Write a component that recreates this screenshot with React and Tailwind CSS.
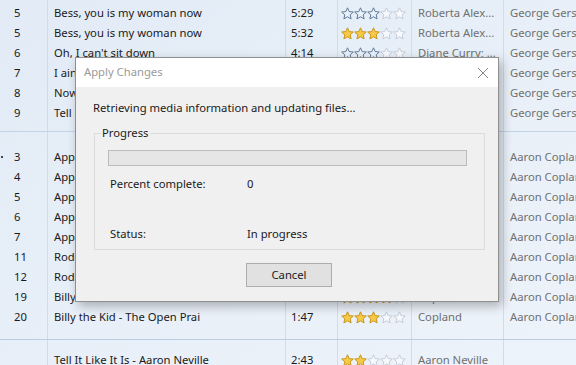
import React from "react";

const font = { fontFamily: '"Segoe UI", "Noto Sans", "Open Sans", sans-serif' };

const group1 = [
  { n: "5", t: "Bess, you is my woman now", d: "5:29", r: 3, c: "blue", a: "Roberta Alex...", aa: "George Gershwin" },
  { n: "5", t: "Bess, you is my woman now", d: "5:32", r: 3, c: "gold", a: "Roberta Alex...", aa: "George Gershwin" },
  { n: "6", t: "Oh, I can't sit down", d: "4:14", r: 3, c: "blue", a: "Diane Curry; ...", aa: "George Gershwin" },
  { n: "7", t: "I ain't got no shame", d: "3:05", r: 3, c: "blue", a: "Roberta Alex...", aa: "George Gershwin" },
  { n: "8", t: "Now your woman is gone", d: "2:11", r: 3, c: "blue", a: "Roberta Alex...", aa: "George Gershwin" },
  { n: "9", t: "Tell me it's true", d: "3:40", r: 3, c: "blue", a: "Roberta Alex...", aa: "George Gershwin" },
];

const group2 = [
  { n: "3", t: "Appalachian Spring - Allegro", d: "2:56", r: 3, c: "gold", a: "Copland", aa: "Aaron Copland" },
  { n: "4", t: "Appalachian Spring - Moderato", d: "3:10", r: 3, c: "gold", a: "Copland", aa: "Aaron Copland" },
  { n: "5", t: "Appalachian Spring - Fast", d: "2:25", r: 3, c: "gold", a: "Copland", aa: "Aaron Copland" },
  { n: "6", t: "Appalachian Spring - Allegro", d: "3:02", r: 3, c: "gold", a: "Copland", aa: "Aaron Copland" },
  { n: "7", t: "Appalachian Spring - Moderato", d: "4:40", r: 3, c: "gold", a: "Copland", aa: "Aaron Copland" },
  { n: "11", t: "Rodeo - Buckaroo Holiday", d: "7:40", r: 3, c: "gold", a: "Copland", aa: "Aaron Copland" },
  { n: "12", t: "Rodeo - Corral Nocturne", d: "3:34", r: 3, c: "gold", a: "Copland", aa: "Aaron Copland" },
  { n: "19", t: "Billy the Kid - Street in a...", d: "2:58", r: 4, c: "gold", a: "Copland", aa: "Aaron Copland" },
  { n: "20", t: "Billy the Kid - The Open Prai", d: "1:47", r: 3, c: "gold", a: "Copland", aa: "Aaron Copland" },
];

const Star = ({ kind }) => {
  const fill = kind === "gold" ? "#f8c945" : kind === "blue" ? "#e9f0f8" : "#f7f9fc";
  const stroke = kind === "gold" ? "#c8961f" : kind === "blue" ? "#5f7a99" : "#c4cdd8";
  return (
    <svg width="13" height="13" viewBox="0 0 13 13" className="shrink-0">
      <polygon
        points="6.5,0.8 8.2,4.6 12.3,5 9.2,7.8 10.1,11.9 6.5,9.8 2.9,11.9 3.8,7.8 0.7,5 4.8,4.6"
        fill={fill}
        stroke={stroke}
        strokeWidth="1"
        strokeLinejoin="round"
      />
    </svg>
  );
};

const Stars = ({ r, c }) => (
  <div className="flex">
    {[0, 1, 2, 3, 4].map((i) => (
      <Star key={i} kind={i < r ? c : "empty"} />
    ))}
  </div>
);

const Cells = ({ row, h = 20 }) => (
  <div className="flex items-center" style={{ height: h }}>
    <div className="w-[48px] h-full border-r border-[#cfdcec] pl-[14px] flex items-center text-[#1a1a1a]">{row?.n}</div>
    <div className="w-[238px] h-full border-r border-[#cfdcec] pl-[6px] flex items-center text-[#1a1a1a] whitespace-nowrap overflow-hidden">{row?.t}</div>
    <div className="w-[52px] h-full border-r border-[#cfdcec] pl-[5px] flex items-center text-[#1a1a1a]">{row?.d}</div>
    <div className="w-[74px] h-full border-r border-[#cfdcec] pl-[3px] flex items-center">{row && <Stars r={row.r} c={row.c} />}</div>
    <div className="w-[92px] h-full border-r border-[#cfdcec] pl-[6px] flex items-center text-[#707070] whitespace-nowrap overflow-hidden">{row?.a}</div>
    <div className="flex-1 h-full pl-[6px] flex items-center text-[#707070] whitespace-nowrap overflow-hidden">{row?.aa}</div>
  </div>
);

const App = () => {
  return (
    <div
      className="relative w-[576px] h-[365px] overflow-hidden text-[11.25px] bg-gradient-to-br from-[#e2ebf6] to-[#edf3fa]"
      style={font}
    >
      <div className="flex flex-col">
        <Cells h={3} />
        {group1.map((row, i) => (
          <Cells key={"a" + i} row={row} />
        ))}
        <Cells h={8} />
        <div className="border-t border-[#c3d3e6]" />
        <Cells h={15} />
        {group2.map((row, i) => (
          <Cells key={"b" + i} row={row} />
        ))}
        <Cells h={12} />
        <div className="border-t border-[#bccde2]" />
        <Cells h={10} />
        <Cells row={{ n: "", t: "Tell It Like It Is - Aaron Neville", d: "2:43", r: 2, c: "gold", a: "Aaron Neville", aa: "" }} />
      </div>
      <div className="absolute left-[1px] top-[156px] w-[2px] h-[2px] bg-[#3a4a5a]" />

      {/* Apply Changes dialog */}
      <div className="absolute left-[75px] top-[57px] w-[424px] h-[245px] border border-[#8f8f8f] bg-[#f0f0f0] shadow-[3px_4px_10px_rgba(0,0,0,0.28)] flex flex-col">
        <div className="h-[29px] bg-white flex items-center justify-between pl-[8px] pr-[9px]">
          <span className="text-[#9a9a9a]">Apply Changes</span>
          <svg width="12" height="12" viewBox="0 0 12 12">
            <path d="M1 1 L11 11 M11 1 L1 11" stroke="#8a8a8a" strokeWidth="1" />
          </svg>
        </div>
        <div className="flex-1 flex flex-col">
          <div className="mt-[13px] ml-[17px] leading-[16px] text-[#1a1a1a]">
            Retrieving media information and updating files...
          </div>
          <div className="relative mt-[17px] ml-[18px] mr-[13px] h-[117px] border border-[#dcdcdc] flex flex-col">
            <span className="absolute -top-[9px] left-[6px] px-[1px] bg-[#f0f0f0] leading-[16px] text-[#1a1a1a]">Progress</span>
            <div className="mt-[16px] ml-[13px] mr-[17px] h-[16px] border border-[#bcbcbc] bg-[#e6e6e6]" />
            <div className="mt-[10px] ml-[15px] flex leading-[16px] text-[#1a1a1a]">
              <span className="w-[137px]">Percent complete:</span>
              <span>0</span>
            </div>
            <div className="mt-[34px] ml-[15px] flex leading-[16px] text-[#1a1a1a]">
              <span className="w-[137px]">Status:</span>
              <span>In progress</span>
            </div>
          </div>
          <button className="mt-[13px] ml-[170px] w-[86px] h-[24px] border border-[#adadad] bg-[#e1e1e1] text-[#1a1a1a]">
            Cancel
          </button>
        </div>
      </div>
    </div>
  );
};

export default App;
